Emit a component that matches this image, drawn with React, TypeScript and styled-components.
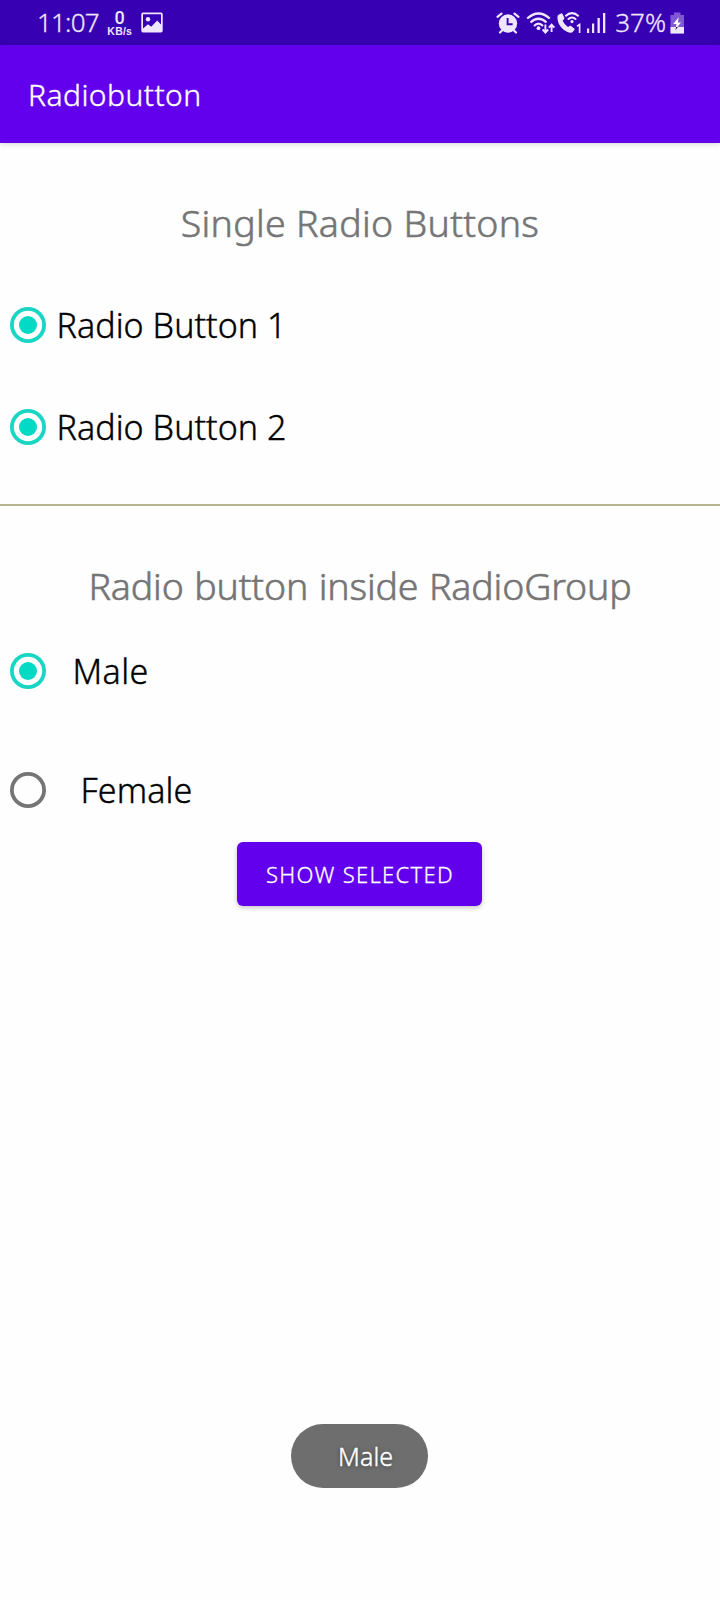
import React, { useState } from "react";
import styled, { createGlobalStyle, css } from "styled-components";

const GlobalStyle = createGlobalStyle`
  * { box-sizing: border-box; }
  body {
    margin: 0;
    background: #fefefe;
    font-family: "Noto Sans", "Open Sans", sans-serif;
    font-weight: 300;
  }
`;

const Screen = styled.div`
  position: relative;
  width: 720px;
  height: 1600px;
  overflow: hidden;
  background: #fefefe;
  display: flex;
  flex-direction: column;
`;

const StatusBar = styled.header`
  height: 45px;
  flex: none;
  display: flex;
  align-items: center;
  justify-content: space-between;
  padding: 0 35px 0 37px;
  background: #3700b3;
  color: #efe6ff;
`;

const StatusSide = styled.div`
  display: flex;
  align-items: center;
  height: 45px;
`;

const StatusText = styled.span<{ $tracking?: number; $gap?: number }>`
  margin-left: ${(p) => p.$gap ?? 0}px;
  font-size: 26px;
  line-height: 45px;
  letter-spacing: ${(p) => p.$tracking ?? 0}px;
  -webkit-text-stroke: 0.3px currentColor;
`;

const Speed = styled.div`
  display: flex;
  flex-direction: column;
  align-items: center;
  width: 26px;
  margin-left: 8px;
  padding-top: 2px;
  font-weight: 700;
`;

const SpeedValue = styled.span`
  font-family: Roboto, sans-serif;
  font-weight: 500;
  font-size: 18px;
  line-height: 15px;
`;

const SpeedUnit = styled.span`
  font-family: "Liberation Sans", Arial, sans-serif;
  font-size: 10.5px;
  line-height: 12px;
  letter-spacing: 0.2px;
`;

const StatusIcon = styled.svg<{ $gap?: number }>`
  display: block;
  flex: none;
  margin-left: ${(p) => p.$gap ?? 0}px;
`;

const AppBar = styled.div`
  position: relative;
  height: 98px;
  flex: none;
  display: flex;
  align-items: center;
  padding: 1px 0 0 28px;
  background: #6200ee;
  box-shadow: 0 1px 6px rgba(0, 0, 0, 0.17);
`;

const Title = styled.h1`
  margin: 0;
  font-size: 30px;
  font-weight: 300;
  line-height: 40px;
  letter-spacing: 0.45px;
  color: #fff;
  -webkit-text-stroke: 0.4px currentColor;
`;

const Main = styled.main`
  display: flex;
  flex-direction: column;
`;

const Heading = styled.h2<{ $tracking: number; $wordGap?: number }>`
  margin: 54px 0 0;
  font-size: 37.5px;
  font-weight: 300;
  line-height: 52px;
  text-align: center;
  letter-spacing: ${(p) => p.$tracking}px;
  word-spacing: ${(p) => p.$wordGap ?? 0}px;
  color: #757575;
  -webkit-text-stroke: 0.6px currentColor;
`;

const RadioList = styled.div<{ $top: number; $gap: number }>`
  display: flex;
  flex-direction: column;
  gap: ${(p) => p.$gap}px;
  margin-top: ${(p) => p.$top}px;
`;

const RadioRow = styled.label`
  display: flex;
  align-items: center;
  height: 102px;
  padding-left: 10px;
  cursor: pointer;
`;

const RadioInput = styled.input`
  appearance: none;
  flex: none;
  width: 36px;
  height: 36px;
  margin: 0;
  border-radius: 50%;
  box-shadow: inset 0 0 0 3.8px #757575;
  display: grid;
  place-items: center;
  ${(p) =>
    p.checked &&
    css`
      box-shadow: inset 0 0 0 3.8px #18d5c4;
      &::after {
        content: "";
        width: 18px;
        height: 18px;
        border-radius: 50%;
        background: #03dac5;
      }
    `}
`;

const RadioText = styled.span<{ $indent: number; $tracking: number }>`
  margin-left: ${(p) => p.$indent}px;
  font-size: 34px;
  line-height: 46px;
  letter-spacing: ${(p) => p.$tracking}px;
  color: #000;
  -webkit-text-stroke: 0.4px currentColor;
`;

const Divider = styled.hr`
  width: 100%;
  height: 2px;
  margin: 26px 0 0;
  border: 0;
  background: #b5b592;
`;

const ShowButton = styled.button`
  align-self: flex-start;
  width: 245px;
  height: 64px;
  margin: 1px 0 0 237px;
  padding: 0 0 1px 1px;
  border: 0;
  border-radius: 6px;
  background: #6200ee;
  color: #fff;
  font: 300 22px/32px "Noto Sans", sans-serif;
  letter-spacing: 1.3px;
  -webkit-text-stroke: 0.3px currentColor;
  box-shadow: 0 2px 5px rgba(0, 0, 0, 0.22);
`;

const Toast = styled.div`
  position: absolute;
  left: 291px;
  bottom: 112px;
  width: 137px;
  height: 64px;
  padding-left: 47px;
  border-radius: 32px;
  background: #6e6e6e;
  color: #fff;
  font-size: 25px;
  line-height: 65px;
  letter-spacing: 0.1px;
  text-shadow: 0 1px 4px rgba(0, 0, 0, 0.5);
  -webkit-text-stroke: 0.4px currentColor;
`;

const PictureIcon = () => (
  <StatusIcon $gap={8} width="22" height="21" viewBox="0 0 22 21">
    <path
      fill="#efe6ff"
      fillRule="evenodd"
      d="M2 .5h18a1.700 1.700 0 0 1 1.700 1.700v16.600a1.700 1.700 0 0 1-1.700 1.700H2a1.700 1.700 0 0 1-1.700-1.700V2.200A1.700 1.700 0 0 1 2 .5zM2 2.200V16.500L7 12.200l3.200 2.500 6-6.200 3.800 4V2.200z"
    />
    <circle cx="7" cy="7.300" r="2.200" fill="#efe6ff" />
  </StatusIcon>
);

const AlarmIcon = () => (
  <StatusIcon width="24" height="22" viewBox="0 0 24 22">
    <circle cx="12" cy="11.500" r="9.200" fill="#efe6ff" />
    <g fill="none" stroke="#efe6ff" strokeWidth="2.200" strokeLinecap="round">
      <path d="M1.500 4.800L5.500 1.600M22.500 4.800L18.500 1.600" />
      <path d="M6 18.500L4 20.500M18 18.500l2 2" />
    </g>
    <path d="M11.600 6v6.300h5" fill="none" stroke="#3700b3" strokeWidth="1.900" />
  </StatusIcon>
);

const WifiIcon = () => (
  <StatusIcon $gap={6} width="30" height="22" viewBox="0 0 30 22">
    <g fill="none" stroke="#efe6ff" strokeWidth="2.200">
      <path d="M1.200 6.500Q12.500-3.500 23.800 6.500" />
      <path d="M4.500 10.500Q12.500 3 20.500 10.500" />
      <path d="M8 14Q12.500 9.500 17 14" />
    </g>
    <circle cx="12.500" cy="16.200" r="1.900" fill="#efe6ff" />
    <g fill="none" stroke="#efe6ff" strokeWidth="1.900">
      <path d="M19.400 12.500v7.500M16.600 17.500l2.800 3 2.800-3" />
      <path d="M25.600 20v-7M22.800 15.700l2.800-3 2.800 3" />
    </g>
  </StatusIcon>
);

const WifiCallIcon = () => (
  <StatusIcon $gap={1} width="26" height="22" viewBox="0 0 26 22">
    <path
      fill="#efe6ff"
      d="M1.500 2.700L4 1.400Q5 1.100 5.500 2L7.300 5.800Q7.600 6.600 7 7.200L5.600 8.700Q7.300 12.500 11 14.900L12.800 13.800Q13.500 13.500 14.100 14L17.300 16.500Q18 17.200 17.400 18L15.700 20.100Q14.900 21 13.400 20.800Q8.500 20 4.300 15.500Q.5 11 .4 5.500Q.4 3.500 1.500 2.700z"
    />
    <g fill="none" stroke="#efe6ff" strokeWidth="2">
      <path d="M8.300 4.300Q15-2 21.700 4.300" />
      <path d="M10.800 7.600Q15 3.500 19.200 7.600" />
    </g>
    <circle cx="15" cy="9.600" r="1.600" fill="#efe6ff" />
    <path d="M20 14.300l2.600-1.700V21" fill="none" stroke="#efe6ff" strokeWidth="1.700" />
  </StatusIcon>
);

const SignalIcon = () => (
  <StatusIcon $gap={4} width="20" height="22" viewBox="0 0 20 22">
    <g fill="#efe6ff">
      <rect x="0" y="16.500" width="2.200" height="4.500" />
      <rect x="5" y="11.500" width="2.200" height="9.500" />
      <rect x="10.500" y="6" width="2.300" height="15" />
      <rect x="16" y="1" width="2.300" height="20" />
    </g>
  </StatusIcon>
);

const BatteryIcon = () => (
  <StatusIcon $gap={4} width="15" height="22" viewBox="0 0 15 22">
    <path d="M4 .5h6.500v2.500H14v18.500H.5V3H4z" fill="#8158d3" />
    <path d="M.5 15h13.500v6.500H.5z" fill="#efe6ff" />
    <path d="M8.700 5.200L3.200 12h3.300l-1 5.300L11 10.500H7.900z" fill="#fff" />
    <path d="M6 15h1.800L5.500 18.200z" fill="#24105c" />
  </StatusIcon>
);

interface RadioProps {
  text: string;
  checked: boolean;
  name: string;
  indent?: number;
  tracking?: number;
  onSelect: () => void;
}

const Radio = ({ text, checked, name, indent = 10.5, tracking = 0.05, onSelect }: RadioProps) => (
  <RadioRow>
    <RadioInput type="radio" name={name} checked={checked} onChange={onSelect} />
    <RadioText $indent={indent} $tracking={tracking}>
      {text}
    </RadioText>
  </RadioRow>
);

export default function App() {
  const [first, setFirst] = useState(true);
  const [second, setSecond] = useState(true);
  const [gender, setGender] = useState("Male");
  const [toast, setToast] = useState("Male");

  return (
    <Screen>
      <GlobalStyle />
      <StatusBar>
        <StatusSide>
          <StatusText $tracking={-0.8}>11:07</StatusText>
          <Speed>
            <SpeedValue>0</SpeedValue>
            <SpeedUnit>KB/s</SpeedUnit>
          </Speed>
          <PictureIcon />
        </StatusSide>
        <StatusSide>
          <AlarmIcon />
          <WifiIcon />
          <WifiCallIcon />
          <SignalIcon />
          <StatusText $gap={8}>37%</StatusText>
          <BatteryIcon />
        </StatusSide>
      </StatusBar>
      <AppBar>
        <Title>Radiobutton</Title>
      </AppBar>
      <Main>
        <Heading $tracking={0.3}>Single Radio Buttons</Heading>
        <RadioList $top={25} $gap={0}>
          <Radio name="first" text="Radio Button 1" checked={first} onSelect={() => setFirst(true)} />
          <Radio name="second" text="Radio Button 2" checked={second} onSelect={() => setSecond(true)} />
        </RadioList>
        <Divider />
        <Heading $tracking={-0.15} $wordGap={1}>
          Radio button inside RadioGroup
        </Heading>
        <RadioList $top={8} $gap={17}>
          <Radio name="gender" text="Male" indent={26.5} tracking={0.4} checked={gender === "Male"} onSelect={() => setGender("Male")} />
          <Radio name="gender" text="Female" indent={34.5} tracking={0.1} checked={gender === "Female"} onSelect={() => setGender("Female")} />
        </RadioList>
        <ShowButton onClick={() => setToast(gender)}>SHOW SELECTED</ShowButton>
      </Main>
      <Toast>{toast}</Toast>
    </Screen>
  );
}
